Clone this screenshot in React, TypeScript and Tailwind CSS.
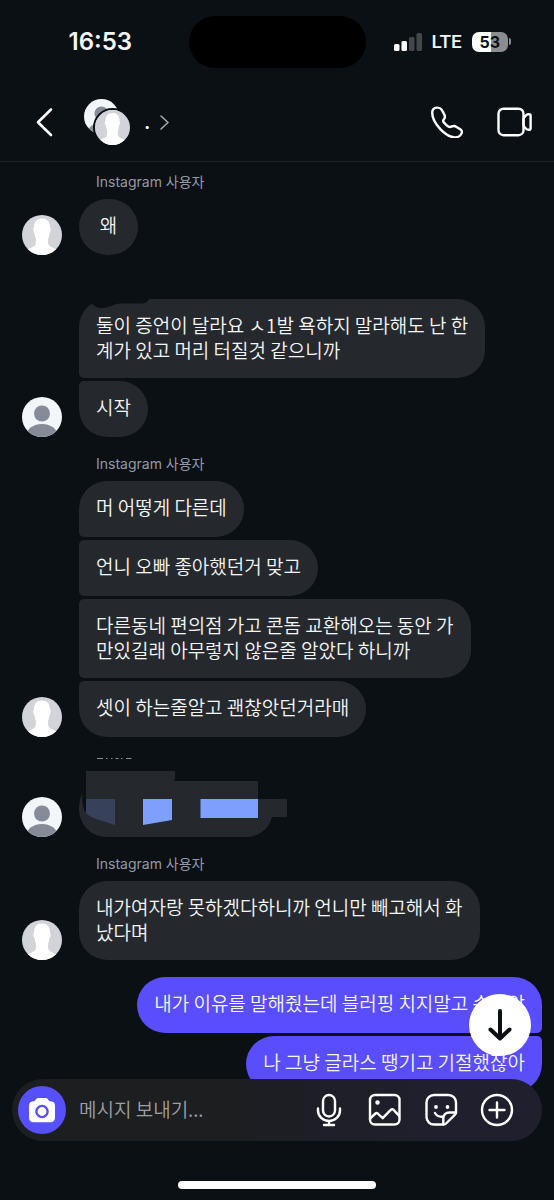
import { ReactNode } from 'react';

type Face = 'silhouette' | 'person';

interface Group {
  name?: string;
  face?: Face;
  messages: string[];
}

const before: Group[] = [
  { name: 'Instagram 사용자', face: 'silhouette', messages: ['왜'] },
  {
    name: '',
    face: 'person',
    messages: ['둘이 증언이 달라요 ㅅ1발 욕하지 말라해도 난 한\n계가 있고 머리 터질것 같으니까', '시작'],
  },
  {
    name: 'Instagram 사용자',
    face: 'silhouette',
    messages: [
      '머 어떻게 다른데',
      '언니 오빠 좋아했던거 맞고',
      '다른동네 편의점 가고 콘돔 교환해오는 동안 가\n만있길래 아무렇지 않은줄 알았다 하니까',
      '셋이 하는줄알고 괜찮앗던거라매',
    ],
  },
];

const after: Group[] = [
  {
    name: 'Instagram 사용자',
    face: 'silhouette',
    messages: ['내가여자랑 못하겠다하니까 언니만 빼고해서 화\n났다며'],
  },
];

const mine = ['내가 이유를 말해줬는데 블러핑 치지말고 손잡앉', '나 그냥 글라스 땡기고 기절했잖아'];

function Avatar({ face, className = 'size-10' }: { face: Face; className?: string }) {
  if (face === 'person') {
    return (
      <svg viewBox="0 0 40 40" className={`${className} shrink-0 rounded-full`} aria-hidden="true">
        <rect width="40" height="40" fill="#f3f6f9" />
        <circle cx="20" cy="16.5" r="8" fill="#858b99" />
        <ellipse cx="20" cy="38.5" rx="15.5" ry="11.5" fill="#858b99" />
      </svg>
    );
  }
  return (
    <svg viewBox="0 0 40 40" className={`${className} shrink-0 rounded-full`} aria-hidden="true">
      <rect width="40" height="40" fill="#d3d4d9" />
      <path
        d="M20 3.500c-5 0-8 3.200-8 8.400 0 1-.7 1.300-.7 2.800 0 1.500.6 2.300 1.200 3.200.3 2.700.8 4.400 1.400 5.900v3.500c0 3-1.600 4-4.200 5.100C7.500 33.400 5.500 34.500 4 37v5h32v-5c-1.500-2.500-3.500-3.600-5.700-4.600-2.600-1.100-4.200-2.100-4.200-5.100v-3.500c.6-1.500 1.100-3.200 1.400-5.900.6-.9 1.200-1.700 1.200-3.200 0-1.500-.7-1.800-.7-2.800 0-5.200-3-8.400-8-8.400z"
        fill="#fff"
      />
    </svg>
  );
}

function StatusBar() {
  return (
    <div className="grid h-[83px] grid-cols-[1fr_177px_1fr] items-center">
      <span className="pl-3 text-center font-['Inter'] text-2xl font-semibold leading-7">16:53</span>
      <div className="h-[52px] rounded-full bg-black" />
      <div className="flex items-center pl-7">
        <svg viewBox="0 0 28 18" className="h-[18px] w-7" aria-hidden="true">
          <rect x="0" y="11" width="5.500" height="7" rx="1.500" fill="#fff" />
          <rect x="7.500" y="8" width="5.500" height="10" rx="1.500" fill="#fff" />
          <rect x="15" y="4" width="5.500" height="14" rx="1.500" fill="#43474b" />
          <rect x="22.500" y="0" width="5.500" height="18" rx="1.500" fill="#43474b" />
        </svg>
        <span className="ml-2.5 font-['Roboto'] text-[19px] font-medium leading-6">LTE</span>
        <div className="ml-2.5 flex h-5 w-9 items-center justify-center rounded-[7px] bg-linear-to-r from-white from-53% to-[#8b8d90] to-53% font-['Inter'] text-base font-bold leading-5 text-[#0b1014]">
          53
        </div>
        <div className="ml-px h-[7px] w-0.5 rounded-r-full bg-[#8b8d90]" />
      </div>
    </div>
  );
}

function Header() {
  return (
    <header className="flex h-[79px] items-center border-b border-[#1d2226] pl-8 pr-[22px]">
      <button type="button" aria-label="뒤로" className="flex size-6 items-center justify-center">
        <svg viewBox="0 0 18 30" className="h-[30px] w-[18px]" fill="none" aria-hidden="true">
          <path d="M16 2.500 3 15.200 16 28" stroke="#fff" strokeWidth="2.600" strokeLinecap="round" strokeLinejoin="round" />
        </svg>
      </button>
      <button type="button" aria-label="대화 정보" className="ml-7 flex items-center">
        <span className="relative block size-[46px]">
          <Avatar face="person" className="size-[35px]" />
          <span className="absolute -right-0.5 -bottom-0.5 rounded-full border-2 border-[#0b1014]">
            <Avatar face="silhouette" className="size-[35px]" />
          </span>
        </span>
        <span className="ml-3.5 font-['Inter'] text-xl font-semibold leading-6">.</span>
        <svg viewBox="0 0 9 15" className="ml-2.5 h-[15px] w-[9px]" fill="none" aria-hidden="true">
          <path d="m1 1 7 6.500L1 14" stroke="#a5a8ad" strokeWidth="1.600" strokeLinecap="round" strokeLinejoin="round" />
        </svg>
      </button>
      <div className="ml-auto flex items-center gap-[34px]">
        <button type="button" aria-label="음성 통화">
          <svg viewBox="0 0 32 32" className="size-8" fill="none" aria-hidden="true">
            <path
              d="M5.800 1.600C3.200 1.800 1.200 3.800 1.200 6.800c0 5 3.100 11 8.100 16.300 4.500 4.700 9.200 7.600 13.500 8.200 3.500.4 6.700-1.200 7.900-4.200.6-1.500.2-2.600-1-3.500-1.400-1-2.800-1.900-4.500-2.900-1.300-.8-2.500-.8-3.900-.3-1.300.5-2.400 1-3.600.3-1.800-1.100-3.600-2.700-5-4.500-.8-1-.6-2 .2-3 1-1.300 1.300-2.500.7-3.900-.8-1.900-1.800-3.800-3-5.700-.9-1.500-2.400-2.100-4.800-2z"
              stroke="#fff"
              strokeWidth="2.400"
              strokeLinejoin="round"
            />
          </svg>
        </button>
        <button type="button" aria-label="영상 통화">
          <svg viewBox="0 0 35 30" className="h-[30px] w-[35px]" fill="none" stroke="#fff" strokeWidth="2.400" aria-hidden="true">
            <rect x="1.500" y="1.700" width="25" height="26.500" rx="5" />
            <path d="M26.500 12.500c0-1 .2-1.700.9-2.400l2-2.100c.6-.6 1.200-.8 2-.8h.6c1 0 1.600.6 1.600 1.600v12.400c0 1-.6 1.600-1.600 1.600h-.6c-.8 0-1.400-.2-2-.8l-2-2.100c-.7-.7-.9-1.400-.9-2.400z" strokeLinejoin="round" />
          </svg>
        </button>
      </div>
    </header>
  );
}

function Bubble({ text, own, first, last }: { text: string; own?: boolean; first: boolean; last: boolean }) {
  const corners = own
    ? `${first ? '' : 'rounded-tr-[5px]'} ${last ? '' : 'rounded-br-[5px]'} bg-[#5a4dfb]`
    : `${first ? '' : 'rounded-tl-[5px]'} ${last ? '' : 'rounded-bl-[5px]'} bg-[#25292d]`;
  return (
    <p
      className={`flex min-h-14 w-fit min-w-[59px] justify-center whitespace-pre-line rounded-[28px] px-[17px] pt-[13px] pb-4 text-[19px] leading-[25px] font-[350] ${corners}`}
    >
      {text}
    </p>
  );
}

function MessageGroup({ name, face, children }: { name?: string; face: Face; children: ReactNode }) {
  return (
    <section>
      <h2 className="mb-[7px] h-5 pl-24 font-['Inter','Noto_Sans_CJK_KR',sans-serif] text-sm leading-5 text-[#9499a5]">{name}</h2>
      <div className="flex items-end gap-[17px] pl-[22px]">
        <Avatar face={face} />
        <div className="relative flex flex-col gap-[3px]">{children}</div>
      </div>
    </section>
  );
}

function Composer() {
  const button = 'flex size-9 items-center justify-center';
  return (
    <form className="mx-3 flex h-[62px] items-center rounded-full bg-linear-to-r from-[#1c1e20] from-40% to-[#201f2e] to-80% pl-1.5 pr-[27px]">
      <button type="button" aria-label="카메라" className="flex size-12 shrink-0 items-center justify-center rounded-full bg-[#5650fa]">
        <svg viewBox="0 0 28 26" className="h-[26px] w-7" aria-hidden="true">
          <path
            d="M10.500 1h7c1.500 0 2.300.9 3 2 .5.900 1.100 1.300 2.200 1.300C25.600 4.400 27 6.200 27 9v11.500c0 3-1.600 4.700-4.600 4.700H5.600c-3 0-4.600-1.700-4.600-4.700V9c0-2.800 1.400-4.600 4.300-4.700 1.100 0 1.700-.4 2.200-1.300.7-1.100 1.500-2 3-2z"
            fill="#fff"
          />
          <circle cx="14" cy="14.500" r="5.600" fill="none" stroke="#5650fa" strokeWidth="2.400" />
        </svg>
      </button>
      <input
        aria-label="메시지"
        placeholder="메시지 보내기..."
        className="ml-[13px] h-12 min-w-0 flex-1 bg-transparent pb-1 text-[19px] leading-6 font-[350] outline-none placeholder:text-[#9da0a6]"
      />
      <div className="flex shrink-0 gap-5">
        <button type="button" aria-label="음성 메시지" className={button}>
          <svg viewBox="0 0 26 34" className="h-[34px] w-[26px]" fill="none" stroke="#fff" strokeWidth="2.400" strokeLinecap="round" aria-hidden="true">
            <rect x="7" y="2" width="12" height="21.500" rx="6" />
            <path d="M2 15.500v2a11 10.500 0 0 0 22 0v-2M13 28v4M8 32h10" />
          </svg>
        </button>
        <button type="button" aria-label="사진" className={button}>
          <svg viewBox="0 0 34 34" className="size-[34px]" fill="none" stroke="#fff" strokeWidth="2.400" strokeLinejoin="round" aria-hidden="true">
            <rect x="2" y="2" width="29.500" height="29.500" rx="5" />
            <circle cx="9.500" cy="9.500" r="2.200" fill="#fff" stroke="none" />
            <path d="m2 25.500 5.500-5c.7-.6 1.500-.6 2.200 0l5 4.700 8.300-8.500c.7-.7 1.600-.7 2.300 0l6.200 6.500" />
          </svg>
        </button>
        <button type="button" aria-label="스티커" className={button}>
          <svg viewBox="0 0 34 34" className="size-[34px]" fill="none" stroke="#fff" strokeWidth="2.400" strokeLinecap="round" strokeLinejoin="round" aria-hidden="true">
            <path d="M19.500 31.500H10a7.500 7.500 0 0 1-7.500-7.500V9.500A7.500 7.500 0 0 1 10 2h14.500A7.500 7.500 0 0 1 32 9.500v9.800c0 1-.3 1.600-1 2.300l-8.900 8.900c-.7.700-1.500 1-2.600 1z" />
            <path d="M19.300 31.300v-5.600c0-3.700 2.500-6.200 6.200-6.200H32" />
            <path d="M11 20c1.600 2.700 4.300 4.200 8 3.700" />
            <circle cx="12" cy="14" r="1.900" fill="#fff" stroke="none" />
            <circle cx="23.500" cy="14" r="1.900" fill="#fff" stroke="none" />
          </svg>
        </button>
        <button type="button" aria-label="더 보기" className={button}>
          <svg viewBox="0 0 34 34" className="size-[34px]" fill="none" stroke="#fff" strokeWidth="2.400" strokeLinecap="round" aria-hidden="true">
            <circle cx="17" cy="17" r="15" />
            <path d="M17 9.500v15M9.500 17h15" />
          </svg>
        </button>
      </div>
    </form>
  );
}

export default function App() {
  return (
    <div className="relative flex h-screen flex-col overflow-hidden bg-[#0b1014] font-['Noto_Sans_CJK_KR',sans-serif] text-[#f3f5f7]">
      <StatusBar />
      <Header />

      <main className="flex min-h-0 flex-1 flex-col gap-[17px] overflow-hidden pt-2.5">
        {before.map((group, g) => (
          <MessageGroup key={g} name={group.name} face={group.face ?? 'person'}>
            {group.messages.map((text, i) => (
              <Bubble key={text} text={text} first={i === 0} last={i === group.messages.length - 1} />
            ))}
            {/* scribble that hides the sender's name */}
            {group.name === '' && (
              <svg viewBox="0 0 70 12" className="absolute top-0 left-2 h-3 w-[70px]" aria-hidden="true">
                <path d="M0 0h62l-1.500 2c-2 2.500-5 2.600-10 2.600H34c-8 0-11 4.400-19 4.400-6 0-7-2-10-4L0 6z" fill="#0b1014" />
              </svg>
            )}
          </MessageGroup>
        ))}

        {/* redacted message */}
        <MessageGroup face="person">
          <svg viewBox="0 0 208 84" className="-mt-7 h-[84px] w-52" aria-label="가려진 메시지">
            <path d="M18 5.500h6M27 5.500h1.500M32 5.500h1.500M36.500 5.500h3M42 5.500h1.500M47 5.500h5.500" stroke="#8b8f98" />
            <path d="M3.500 40C1 45 0 50 0 56c0 12 9 28 28 28h137c17 0 25-9 28-20V46H7v14C4 56 2.500 48 3.500 40z" fill="#25292d" />
            <path d="M7 18h89v7q0 3-2 3h85v18h29v18h-29v6H12L7 62z" fill="#25292d" />
            <path d="M7 46h29v26l-19-6c-4-1.500-7-3-10-6z" fill="#374159" />
            <path d="M64 46h29v21l-29 5z" fill="#7f9fff" />
            <path d="M121.500 46H179v19h-57.500z" fill="#7f9fff" />
          </svg>
        </MessageGroup>

        {after.map((group, g) => (
          <MessageGroup key={g} name={group.name} face={group.face ?? 'person'}>
            {group.messages.map((text) => (
              <Bubble key={text} text={text} first last />
            ))}
          </MessageGroup>
        ))}

        <section className="flex flex-col items-end gap-[3px] pr-3">
          {mine.map((text, i) => (
            <Bubble key={text} text={text} own first={i === 0} last={i === mine.length - 1} />
          ))}
        </section>
      </main>

      {/* composer floats over the thread */}
      <footer className="absolute inset-x-0 bottom-0 flex flex-col">
        <button
          type="button"
          aria-label="최신 메시지로 이동"
          className="mr-[23px] mb-[23px] flex size-[62px] items-center justify-center self-end rounded-full bg-white"
        >
          <svg viewBox="0 0 24 32" className="h-8 w-6" fill="none" aria-hidden="true">
            <path d="M12 2v27M2.500 20.500 12 29.500l9.500-9" stroke="#0b1014" strokeWidth="4" strokeLinecap="round" strokeLinejoin="round" />
          </svg>
        </button>
        <Composer />
        <div className="mx-auto mt-10 mb-[11px] h-2 w-[198px] rounded-full bg-white" />
      </footer>
    </div>
  );
}
